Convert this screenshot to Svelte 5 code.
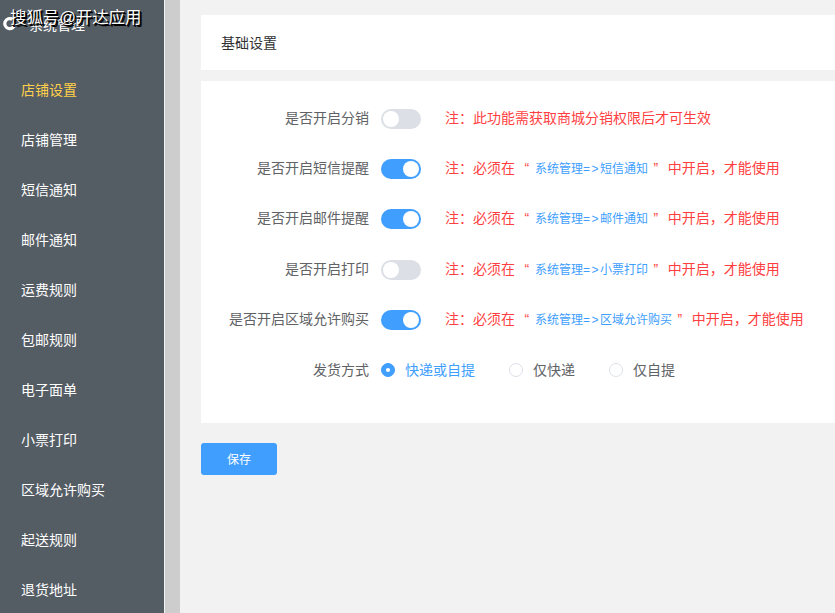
<script>
  const menu = ['店铺设置','店铺管理','短信通知','邮件通知','运费规则','包邮规则','电子面单','小票打印','区域允许购买','起送规则','退货地址'];
  const rows = [
    { label: '是否开启分销', on: false, plain: '注：此功能需获取商城分销权限后才可生效' },
    { label: '是否开启短信提醒', on: true, target: '短信通知' },
    { label: '是否开启邮件提醒', on: true, target: '邮件通知' },
    { label: '是否开启打印', on: false, target: '小票打印' },
    { label: '是否开启区域允许购买', on: true, target: '区域允许购买' }
  ];
  const radios = [
    { text: '快递或自提', checked: true },
    { text: '仅快递', checked: false },
    { text: '仅自提', checked: false }
  ];
</script>

<div class="page">
  <aside class="sidebar">
    <div class="head">
      <svg class="head-icon" viewBox="0 0 14 14" width="14" height="14" aria-hidden="true">
        <path d="M9.5 2.4A5 5 0 1 0 11.8 7" fill="none" stroke="#fff" stroke-width="3.2" />
      </svg>
      <span>系统管理</span>
    </div>
    <ul class="menu">
      {#each menu as item, i}
        <li class:active={i === 0}>{item}</li>
      {/each}
    </ul>
  </aside>
  <div class="scrollbar"></div>
  <main class="main">
    <div class="title-card">基础设置</div>
    <section class="form-card">
      {#each rows as row}
        <div class="row">
          <span class="label">{row.label}</span>
          <span class="switch" class:on={row.on}><i></i></span>
          {#if row.plain}
            <span class="note">{row.plain}</span>
          {:else}
            <span class="note">注：必须在 <span class="q">“</span><span class="link">系统管理<span class="arrow">=&gt;</span>{row.target}</span><span class="q">”</span> 中开启，才能使用</span>
          {/if}
        </div>
      {/each}
      <div class="row radio-row">
        <span class="label">发货方式</span>
        <div class="radios">
          {#each radios as r}
            <span class="radio" class:checked={r.checked}><i></i>{r.text}</span>
          {/each}
        </div>
      </div>
    </section>
    <button class="save" type="button">保存</button>
  </main>
  <div class="watermark">搜狐号@开达应用</div>
</div>

<style>
  :global(body) {
    margin: 0;
    background: #f2f2f2;
  }
  .page {
    position: relative;
    display: flex;
    width: 835px;
    height: 613px;
    overflow: hidden;
    font-family: "Liberation Sans", "Noto Sans CJK SC", sans-serif;
    font-size: 13px;
  }
  .sidebar {
    flex: 0 0 164px;
    background: #545c64;
    color: #fff;
    overflow: hidden;
  }
  .head {
    display: flex;
    align-items: center;
    height: 47px;
    padding-left: 3px;
    box-sizing: border-box;
  }
  .head span {
    margin-left: 12px;
    font-size: 14px;
  }
  .head-icon {
    margin-top: 1px;
  }
  .menu {
    list-style: none;
    margin: 18px 0 0;
    padding: 0;
  }
  .menu li {
    height: 50px;
    line-height: 50px;
    padding-left: 21px;
    font-size: 14px;
  }
  .menu li.active {
    color: #ffd04b;
  }
  .scrollbar {
    flex: 0 0 15px;
    margin-left: 1px;
    background: #cdcdcd;
  }
  .main {
    flex: 1;
    min-width: 0;
    padding: 15px 0 0 21px;
    background: #f2f2f2;
  }
  .title-card {
    height: 56px;
    line-height: 56px;
    padding-left: 20px;
    background: #fff;
    border-bottom: 1px solid #f0f0f0;
    box-sizing: border-box;
    color: #303133;
    font-size: 14px;
  }
  .form-card {
    margin-top: 10px;
    height: 342px;
    padding-top: 13px;
    box-sizing: border-box;
    background: #fff;
  }
  .row {
    display: flex;
    align-items: center;
    height: 50.2px;
  }
  .label {
    width: 168px;
    margin-top: -4px;
    text-align: right;
    color: #606266;
    font-size: 14px;
  }
  .switch {
    display: block;
    position: relative;
    width: 40px;
    height: 20px;
    margin-left: 12px;
    border-radius: 10px;
    background: #dcdfe6;
  }
  .switch i {
    position: absolute;
    top: 2px;
    left: 2px;
    width: 16px;
    height: 16px;
    border-radius: 50%;
    background: #fff;
  }
  .switch.on {
    background: #409eff;
  }
  .switch.on i {
    left: 22px;
  }
  .note {
    margin-left: 24px;
    margin-top: -4px;
    color: #ff3f3f;
    font-size: 14px;
    white-space: nowrap;
  }
  .q {
    display: inline-block;
    width: 16px;
    text-align: center;
  }
  .link {
    color: #409eff;
    font-size: 12px;
  }
  .arrow {
    letter-spacing: 1.5px;
  }
  .radio-row .label {
    margin-top: -3px;
  }
  .radios {
    display: flex;
    margin-left: 12px;
  }
  .radio {
    display: flex;
    align-items: center;
    color: #606266;
    font-size: 14px;
    margin-right: 34px;
    margin-top: -3px;
  }
  .radio i {
    width: 14px;
    height: 14px;
    margin-top: 2px;
    margin-right: 10px;
    box-sizing: border-box;
    border: 1px solid #dcdfe6;
    border-radius: 50%;
    background: #fff;
    position: relative;
  }
  .radio.checked {
    color: #409eff;
  }
  .radio.checked i {
    background: #409eff;
    border-color: #409eff;
  }
  .radio.checked i::after {
    content: "";
    position: absolute;
    top: 3px;
    left: 3px;
    width: 6px;
    height: 6px;
    border-radius: 50%;
    background: #fff;
    transform: scale(0.7);
  }
  .save {
    display: block;
    width: 76px;
    height: 32px;
    margin-top: 20px;
    padding: 0 0 2px;
    border: 0;
    border-radius: 3px;
    background: #409eff;
    color: #fff;
    font-family: inherit;
    font-size: 12px;
  }
  .watermark {
    position: absolute;
    top: 6px;
    left: 10px;
    color: #fff;
    font-size: 16.4px;
    line-height: 22px;
    text-shadow: 1px 1px 0 #000, 2px 2px 0 #000;
  }
</style>
